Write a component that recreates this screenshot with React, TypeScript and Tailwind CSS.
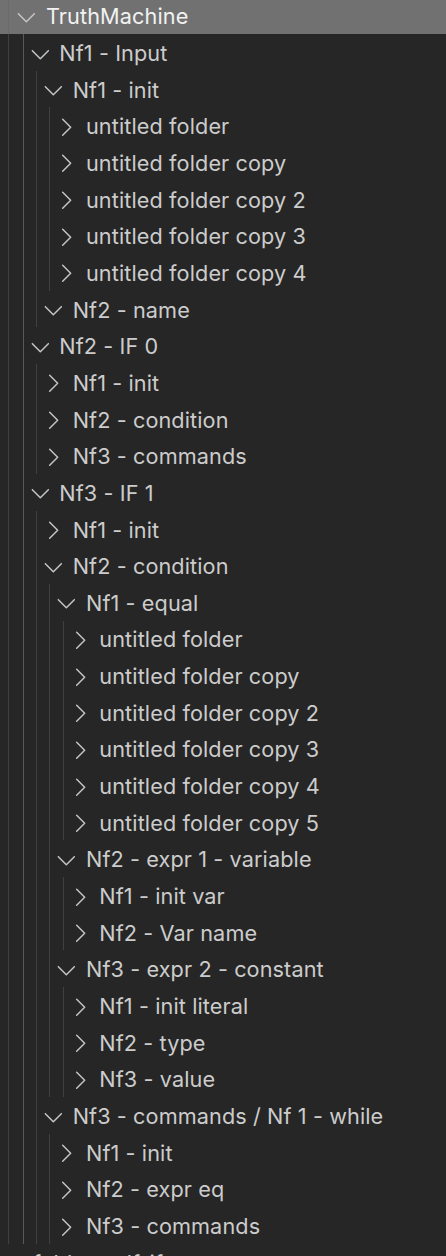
import React from "react";

type Node = { label: string; open?: boolean; children?: Node[] };

const uf = (n: number): Node[] => {
  const names = ["untitled folder", "untitled folder copy", "untitled folder copy 2", "untitled folder copy 3", "untitled folder copy 4", "untitled folder copy 5"];
  return names.slice(0, n).map((l) => ({ label: l }));
};

const tree: Node[] = [
  {
    label: "Nf1 - Input",
    open: true,
    children: [
      { label: "Nf1 - init", open: true, children: uf(5) },
      { label: "Nf2 - name", open: true, children: [] },
    ],
  },
  {
    label: "Nf2 - IF 0",
    open: true,
    children: [{ label: "Nf1 - init" }, { label: "Nf2 - condition" }, { label: "Nf3 - commands" }],
  },
  {
    label: "Nf3 - IF 1",
    open: true,
    children: [
      { label: "Nf1 - init" },
      {
        label: "Nf2 - condition",
        open: true,
        children: [
          { label: "Nf1 - equal", open: true, children: uf(6) },
          {
            label: "Nf2 - expr 1 - variable",
            open: true,
            children: [{ label: "Nf1 - init var" }, { label: "Nf2 - Var name" }],
          },
          {
            label: "Nf3 - expr 2 - constant",
            open: true,
            children: [{ label: "Nf1 - init literal" }, { label: "Nf2 - type" }, { label: "Nf3 - value" }],
          },
        ],
      },
      {
        label: "Nf3 - commands / Nf 1 - while",
        open: true,
        children: [{ label: "Nf1 - init" }, { label: "Nf2 - expr eq" }, { label: "Nf3 - commands" }],
      },
    ],
  },
];

const STEP = 13.333;
const chevCenter = (l: number) => 26.667 + STEP * l;
const guideX = (l: number) => chevCenter(l) - 4;

function Chevron({ open }: { open?: boolean }) {
  return (
    <svg width="26.667" height="26.667" viewBox="0 0 16 16" className="shrink-0" fill="none" stroke="#c5c5c5" strokeWidth="0.9" strokeLinecap="round" strokeLinejoin="round">
      {open ? <polyline points="3.2,5.8 8,10.6 12.8,5.8" /> : <polyline points="5.8,3.2 10.6,8 5.8,12.8" />}
    </svg>
  );
}

function Group({ nodes, level, left }: { nodes: Node[]; level: number; left: number }) {
  return (
    <>
      {nodes.map((n, i) => {
        const pad = chevCenter(level) - 13.333 - left;
        const gl = guideX(level) - left;
        const hasKids = n.open && n.children && n.children.length > 0;
        return (
          <div key={i}>
            <div className="flex h-[36.667px] items-center pt-[3px] text-[#cccccc]" style={{ paddingLeft: pad }}>
              <Chevron open={n.open} />
              <span className="ml-[6px] whitespace-nowrap tracking-[0.1px]">{n.label}</span>
            </div>
            {hasKids && (
              <div className={level === 0 ? "border-l border-[#585858]" : "border-l border-[#404040]"} style={{ marginLeft: gl }}>
                <Group nodes={n.children!} level={level + 1} left={guideX(level) + 1} />
              </div>
            )}
          </div>
        );
      })}
    </>
  );
}

export default function App() {
  return (
    <div
      className="h-[1256px] w-[446px] overflow-hidden bg-[#262626] text-[21.667px] leading-none"
      style={{ fontFamily: "Inter, 'Noto Sans', sans-serif" }}
    >
      <div className="mt-[-2.667px]">
        <div className="flex h-[36.667px] items-center bg-[#717171] text-[#f2f2f2]">
          <div className="w-[8px] shrink-0 self-stretch" />
          <div className="w-px shrink-0 self-stretch bg-[#6a6a6a]" />
          <div className="flex items-center pl-[4.333px] pt-[3px]">
            <Chevron open />
            <span className="ml-[6px] whitespace-nowrap tracking-[0.1px]">TruthMachine</span>
          </div>
        </div>
        <div className="ml-[8px] border-l border-[#404040]">
          <div className="ml-[13.667px] border-l border-[#585858]">
            <Group nodes={tree} level={1} left={guideX(0) + 1} />
          </div>
        </div>
        <div className="flex h-[36.667px] items-center pt-[3px] text-[#cccccc]">
          <div className="ml-[2px] h-[15px] w-[14px] shrink-0 border border-[#9a6fd0] bg-[#5b3d86]" />
          <span className="ml-[17px] whitespace-nowrap tracking-[0.1px]">folder-self-if</span>
        </div>
      </div>
    </div>
  );
}
